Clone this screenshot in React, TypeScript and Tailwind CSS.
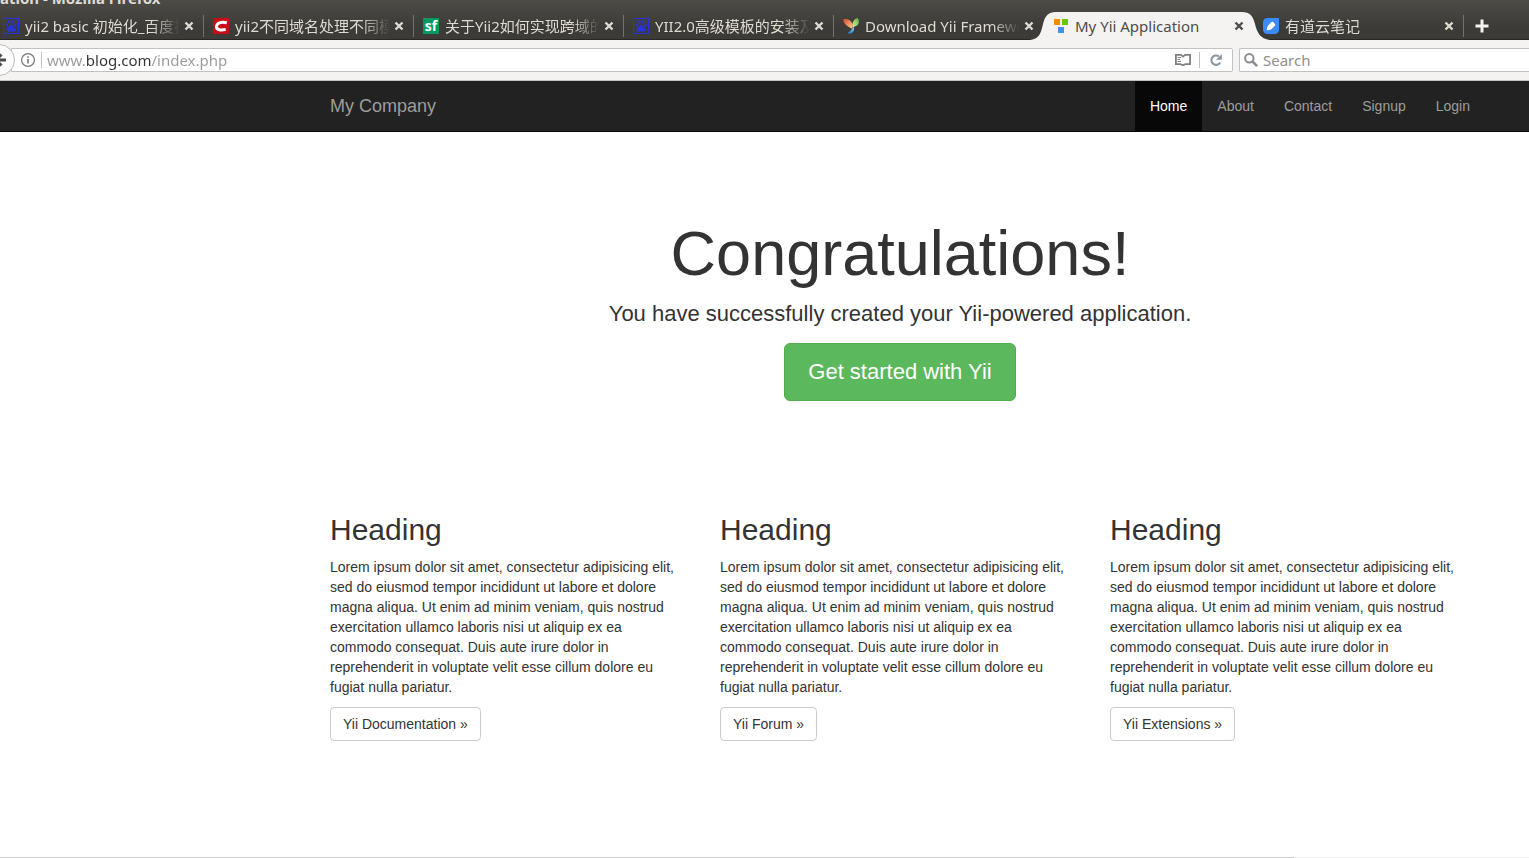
import React, { useState } from 'react';

interface Tab {
  title: string;
  icon: React.ReactNode;
  active?: boolean;
}

const BaiduIcon = () => (
  <svg viewBox="0 0 16 16" className="size-4 shrink-0" fill="#2932e1">
    <rect x="0.5" y="0.5" width="15" height="15" fill="none" stroke="#2932e1" />
    <ellipse cx="3.7" cy="7" rx="1.3" ry="1.6" />
    <ellipse cx="6.2" cy="3.900" rx="1.200" ry="1.700" />
    <ellipse cx="9.8" cy="3.900" rx="1.200" ry="1.700" />
    <ellipse cx="12.3" cy="7" rx="1.3" ry="1.6" />
    <path d="M8 7C10 7 10.200 8.800 11.500 9.800 13 11 13 13.600 10.800 13.600H5.200C3 13.600 3 11 4.500 9.800 5.800 8.800 6 7 8 7Z" />
  </svg>
);

const CsdnIcon = () => (
  <svg viewBox="0 0 16 16" className="size-4 shrink-0">
    <rect width="16" height="16" fill="#ca0c16" />
    <path d="M13.800 4.700C10.500 4 4.200 3.600 3.500 8.200 3 12.500 8.500 12.300 12.700 11.500" fill="none" stroke="#fff" strokeWidth="3" />
  </svg>
);

const SegmentFaultIcon = () => (
  <span className="flex size-4 shrink-0 items-center justify-center bg-[#009a61] font-['Open_Sans',sans-serif] text-sm leading-4 font-bold text-white">
    sf
  </span>
);

const YiiIcon = () => (
  <svg viewBox="0 0 16 16" className="size-4 shrink-0">
    <defs>
      <linearGradient id="yiiLeft" x1="0" y1="0" x2="1" y2="1">
        <stop offset="0" stopColor="#d8432e" />
        <stop offset="1" stopColor="#fbd18a" />
      </linearGradient>
      <linearGradient id="yiiRight" x1="1" y1="0" x2="0" y2="1">
        <stop offset="0" stopColor="#5fae3b" />
        <stop offset="1" stopColor="#e4efa6" />
      </linearGradient>
      <linearGradient id="yiiStem" x1="0" y1="0" x2="0" y2="1">
        <stop offset="0" stopColor="#a9d8ef" />
        <stop offset="1" stopColor="#1672b8" />
      </linearGradient>
    </defs>
    <path d="M0 1.300C4 .3 8.500 2 9.500 6.500 9.900 8.500 9.500 9.500 8.800 10.500 6 9 1 7.500 0 1.300Z" fill="url(#yiiLeft)" />
    <path d="M14.500 0C16 1.500 16.500 4.800 14.800 6.800 13.300 8.400 11.200 8.500 9.800 9.600 8.700 5.500 10.500 1 14.500 0Z" fill="url(#yiiRight)" />
    <path d="M10.800 9C11.800 12 10.500 15.300 6.800 16 5.800 16 5.200 15.400 5 14.600 7.800 13.300 8.300 11.200 10.800 9Z" fill="url(#yiiStem)" />
  </svg>
);

const AppIcon = () => (
  <svg viewBox="0 0 16 16" className="size-4 shrink-0">
    <rect x="1" y="1" width="6" height="6" fill="#ff8a00" />
    <rect x="9" y="1" width="6" height="6" fill="#6fc400" />
    <rect x="5" y="9" width="6" height="6" fill="#4492f0" />
  </svg>
);

const YoudaoIcon = () => (
  <svg viewBox="0 0 16 16" className="size-4 shrink-0">
    <path d="M4.500 0H16v11.500a4.500 4.500 0 0 1-4.500 4.500h-7A4.500 4.500 0 0 1 0 11.500v-7A4.500 4.500 0 0 1 4.500 0z" fill="#398bff" />
    <path d="M3.800 12.300c.1-2 .3-3.700 1.300-4.900l3.300-3.300c.6-.5 1.300-.4 1.800 0l1.800 1.800c.4.500.4 1.200 0 1.700L8.700 11c-1.200 1-2.900 1.300-4.900 1.300z" fill="#fff" />
  </svg>
);

const CloseIcon = () => (
  <svg viewBox="0 0 10 10" className="size-[10px]" fill="none" stroke="currentColor" strokeWidth="2.400">
    <path d="M1.500 1.500l7 7M8.500 1.500l-7 7" />
  </svg>
);

const tabs: Tab[] = [
  { title: 'yii2 basic 初始化_百度搜索', icon: <BaiduIcon /> },
  { title: 'yii2不同域名处理不同模块', icon: <CsdnIcon /> },
  { title: '关于Yii2如何实现跨域的问题', icon: <SegmentFaultIcon /> },
  { title: 'YII2.0高级模板的安装及配置', icon: <BaiduIcon /> },
  { title: 'Download Yii Framework', icon: <YiiIcon /> },
  { title: 'My Yii Application', icon: <AppIcon />, active: true },
  { title: '有道云笔记', icon: <YoudaoIcon /> },
];

const navItems = ['Home', 'About', 'Contact', 'Signup', 'Login'];

const columns = ['Yii Documentation', 'Yii Forum', 'Yii Extensions'];

const lorem =
  'Lorem ipsum dolor sit amet, consectetur adipisicing elit, sed do eiusmod tempor incididunt ut labore et dolore magna aliqua. Ut enim ad minim veniam, quis nostrud exercitation ullamco laboris nisi ut aliquip ex ea commodo consequat. Duis aute irure dolor in reprehenderit in voluptate velit esse cillum dolore eu fugiat nulla pariatur.';

const TabItem: React.FC<{ tab: Tab; first: boolean; divider: boolean }> = ({ tab, first, divider }) => (
  <div
    className={`relative flex h-7 shrink-0 items-center ${first ? 'w-[204px] pl-[3px]' : 'w-[210px] pl-[9px]'} ${
      tab.active ? 'z-10 text-[#4c4c4c]' : 'text-[#dfdbd2]'
    }`}
  >
    {tab.active && (
      <svg viewBox="0 0 240 28" className="absolute top-0 -left-[14px] h-7 w-60" fill="#f4f3f1">
        <path d="M0 28C10 27 11 20 13 12 15 4 18 0 26 0H212C220 0 223 4 225 12 227 20 230 27 240 28Z" />
      </svg>
    )}
    <button type="button" className="relative flex min-w-0 flex-1 items-center gap-[6px]">
      {tab.icon}
      <span
        className={`-mt-px flex-1 overflow-hidden text-left leading-5 whitespace-nowrap ${
          tab.active ? '' : '[mask-image:linear-gradient(to_left,transparent,black_28px)]'
        }`}
      >
        {tab.title}
      </span>
    </button>
    <button type="button" aria-label="Close tab" className={`relative ml-1 shrink-0 ${divider ? 'mr-[9px]' : 'mr-[10px]'}`}>
      <CloseIcon />
    </button>
    {divider && <span className="h-[22px] w-px shrink-0 bg-[#73726d]" />}
  </div>
);

const BrowserChrome: React.FC = () => {
  const [url, setUrl] = useState('www.blog.com/index.php');

  return (
    <header className="font-['Noto_Sans','Noto_Sans_CJK_SC',sans-serif] text-[15px]">
      <div className="border-b border-[#282724] bg-linear-to-b from-[#4c4b46] to-[#3c3b37] to-70%">
        <div className="flex h-3 items-start">
          <p className="-mt-[11px] text-[15px] leading-[18px] font-bold whitespace-nowrap text-[#dfdbd2]">
            ation - Mozilla Firefox
          </p>
        </div>
        <div className="-mb-px flex h-7 items-center">
          {tabs.map((tab, i) => (
            <TabItem key={tab.title} tab={tab} first={i === 0} divider={!tab.active && !tabs[i + 1]?.active} />
          ))}
          <button type="button" aria-label="New tab" className="ml-[11px] text-[#f4f3f1]">
            <svg viewBox="0 0 14 14" className="size-[14px]" fill="currentColor">
              <path d="M5.500 .5h3v5H13.500v3H8.500v5H5.500v-5H.5v-3h5z" />
            </svg>
          </button>
        </div>
      </div>

      <div className="flex h-[41px] items-center overflow-hidden border-b border-[#c4c2be] bg-[#f4f3f1]">
        <button
          type="button"
          aria-label="Back"
          className="relative z-10 -ml-[17px] flex size-8 shrink-0 items-center justify-end rounded-full border border-[#bdbbb6] bg-[#fbfbfb] pr-2 text-[#4c4c4c]"
        >
          <svg viewBox="0 0 14 14" className="size-[14px]" fill="none" stroke="currentColor" strokeWidth="3">
            <path d="M14 7H3M9.500 1.500L4 7 9.500 12.500" />
          </svg>
        </button>
        <div className="-ml-1 flex h-6 min-w-0 flex-1 items-center rounded-r-[2px] border border-[#c4c2be] bg-white pl-[9px]">
          <svg viewBox="0 0 14 14" className="size-[14px] shrink-0" fill="none" stroke="#777">
            <circle cx="7" cy="7" r="6.400" strokeWidth="1.200" />
            <path d="M7 6v4.500M7 3.300v1.500" strokeWidth="1.600" />
          </svg>
          <span className="ml-[6px] h-4 w-px bg-[#c4c2be]" />
          <input
            type="text"
            aria-label="Address"
            value={url}
            onChange={(e) => setUrl(e.target.value)}
            className="ml-[5px] h-5 min-w-0 flex-1 bg-[linear-gradient(90deg,#999_39px,#333_39px,#333_105px,#999_105px)] bg-clip-text text-transparent caret-black outline-none"
          />
          <button type="button" aria-label="Reader view" className="mr-2 shrink-0">
            <svg viewBox="0 0 16 12" className="h-3 w-4" fill="none" stroke="#808080" strokeWidth="1.800">
              <path d="M6 .9H.9v9.300H5.500L8 11.300l2.500-1.100h4.600V.9H10L8 2.600 6 .9z" />
              <path d="M2.500 3.500H6M2.500 5.500H5M2.500 7.500H6" strokeWidth="1" />
            </svg>
          </button>
          <span className="h-4 w-px bg-[#c4c2be]" />
          <button type="button" aria-label="Reload" className="mr-[10px] ml-[10px] shrink-0">
            <svg viewBox="0 0 12 12" className="size-3" fill="none" stroke="#8796a5" strokeWidth="2">
              <path d="M8.800 2.300A4.700 4.700 0 1 0 10.200 8.500" />
              <path d="M11.800 0v5.800H6z" fill="#8796a5" stroke="none" />
            </svg>
          </button>
        </div>
        <label className="ml-[6px] flex h-6 w-[290px] shrink-0 items-center rounded-l-[2px] border border-r-0 border-[#c4c2be] bg-white pl-1">
          <svg viewBox="0 0 14 14" className="size-[14px] shrink-0" fill="none" stroke="#8c8c8c">
            <circle cx="5.300" cy="5.300" r="4.200" strokeWidth="2" />
            <path d="M8.500 8.500l4.600 4.600" strokeWidth="2.500" />
          </svg>
          <input
            type="text"
            placeholder="Search"
            aria-label="Search"
            className="ml-[5px] h-5 min-w-0 flex-1 outline-none placeholder:text-[#909090]"
          />
        </label>
      </div>
    </header>
  );
};

const App: React.FC = () => {
  return (
    <div className="flex min-h-screen flex-col overflow-x-hidden bg-white font-['Liberation_Sans',Arial,sans-serif] text-sm leading-5 text-[#333]">
      <BrowserChrome />

      <nav className="border-b border-[#080808] bg-[#222]">
        <div className="mr-11 ml-auto flex max-w-[1170px] justify-between pl-[15px]">
          <a href="#" className="py-[15px] text-lg leading-5 text-[#9d9d9d]">
            My Company
          </a>
          <ul className="flex">
            {navItems.map((item, i) => (
              <li key={item}>
                <a
                  href="#"
                  className={`block px-[15px] py-[15px] leading-5 ${i === 0 ? 'bg-[#080808] text-white' : 'text-[#9d9d9d]'}`}
                >
                  {item}
                </a>
              </li>
            ))}
          </ul>
        </div>
      </nav>

      <main className="mr-11 ml-auto w-full max-w-[1170px] flex-1 px-[15px]">
        <section className="pt-[87px] text-center">
          <h1 className="mb-[11px] text-[63px] leading-[69px]">Congratulations!</h1>
          <p className="mb-[14px] text-[22px] leading-[30px]">You have successfully created your Yii-powered application.</p>
          <a
            href="#"
            className="inline-block rounded-md border border-[#4cae4c] bg-[#5cb85c] px-[23px] py-[14px] align-top text-[22px] leading-7 text-white"
          >
            Get started with Yii
          </a>
        </section>

        <section className="grid grid-cols-3 gap-[30px] pt-28">
          {columns.map((name) => (
            <div key={name}>
              <h2 className="mb-[11px] text-3xl leading-[33px]">Heading</h2>
              <p className="mb-[10px] pr-3">{lorem}</p>
              <a href="#" className="inline-block rounded border border-[#ccc] px-3 py-[6px] align-top">
                {name} »
              </a>
            </div>
          ))}
        </section>
      </main>

      <footer className="flex h-px">
        <span className="flex-1 bg-[#ccc]" />
        <span className="w-[235px] bg-[#eee]" />
      </footer>
    </div>
  );
};

export default App;
